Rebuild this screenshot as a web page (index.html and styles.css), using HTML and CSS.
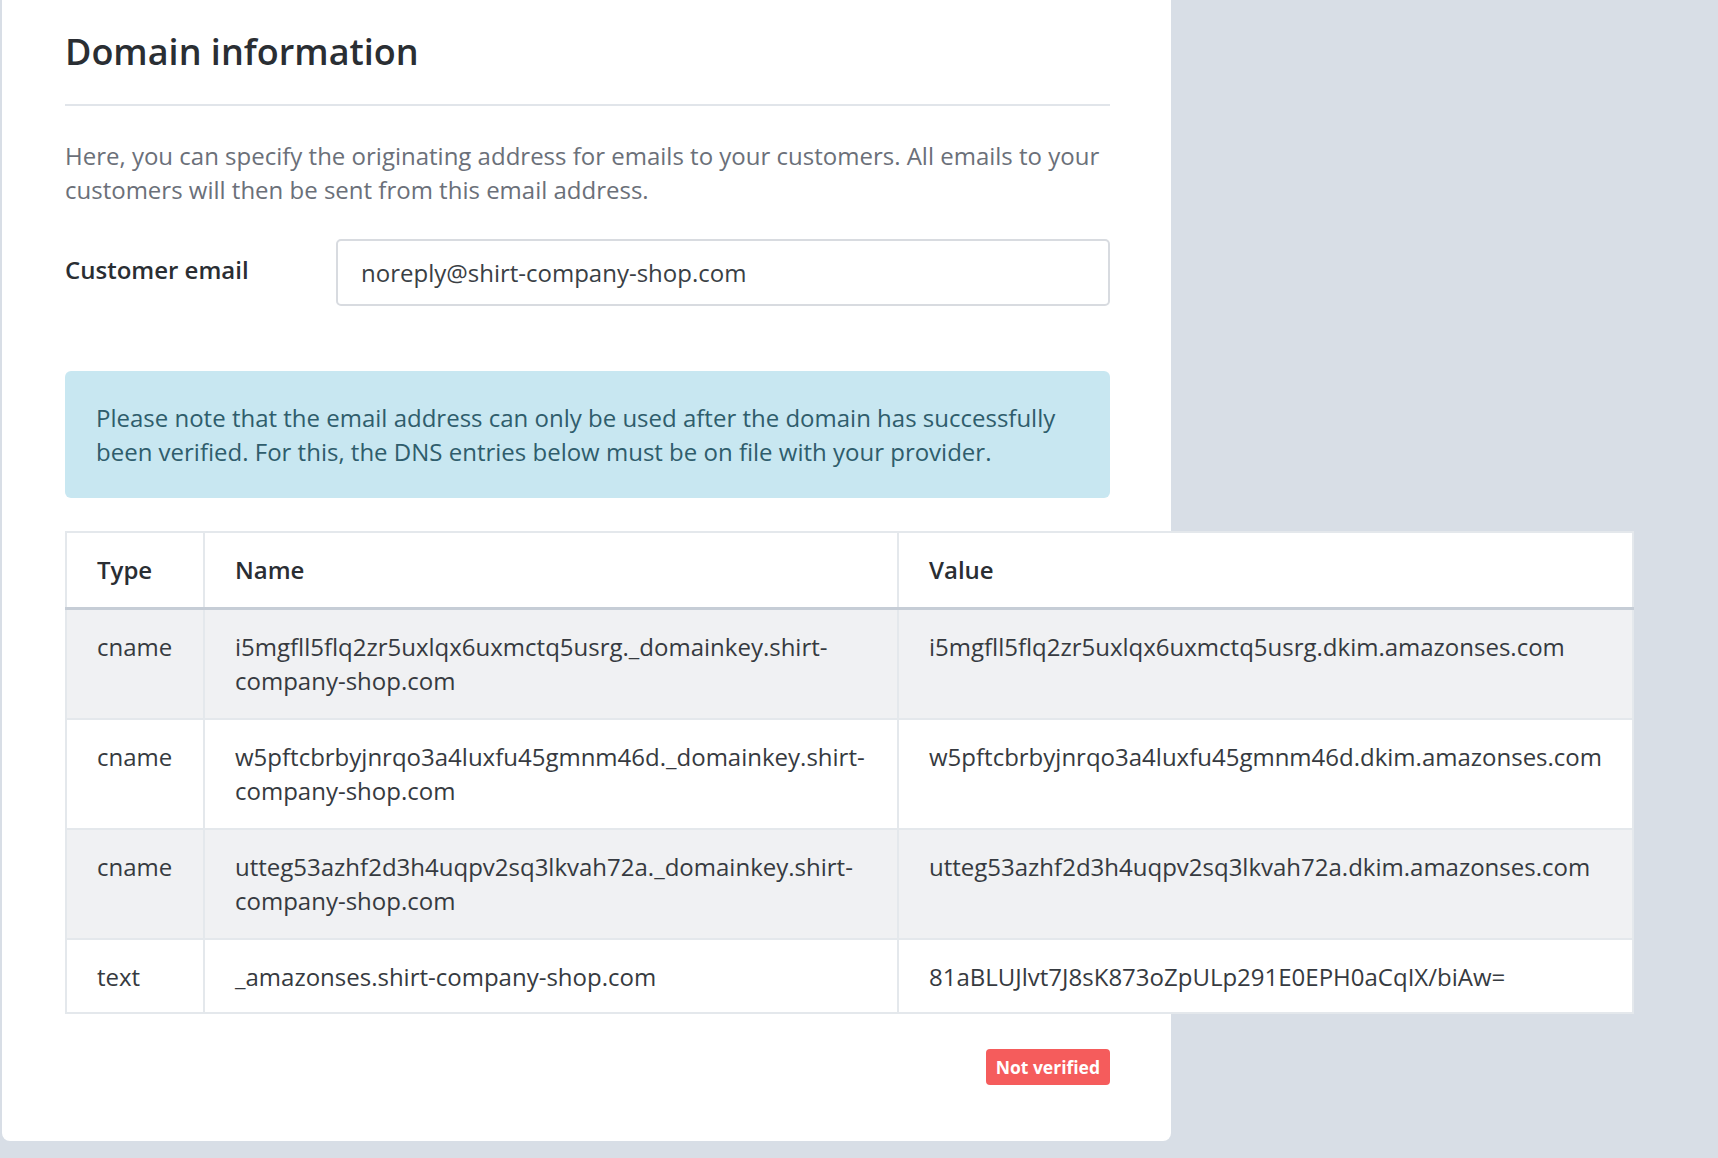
FILE: index.html
```html
<!DOCTYPE html>
<html lang="en">
<head>
  <meta charset="UTF-8">
  <meta name="viewport" content="width=device-width, initial-scale=1.0">
  <title>Domain information</title>
  <link rel="stylesheet" href="styles.css">
</head>
<body>
  <div class="page">
    <div class="card">
      <h1>Domain information</h1>
      <p class="intro">Here, you can specify the originating address for emails to your customers. All emails to your customers will then be sent from this email address.</p>

      <div class="field">
        <label for="customerEmail">Customer email</label>
        <input type="text" id="customerEmail" value="noreply@shirt-company-shop.com">
      </div>

      <div class="alert">Please note that the email address can only be used after the domain has successfully been verified. For this, the DNS entries below must be on file with your provider.</div>

      <table class="dns">
        <thead>
          <tr>
            <th class="col-type">Type</th>
            <th class="col-name">Name</th>
            <th class="col-value">Value</th>
          </tr>
        </thead>
        <tbody>
          <tr>
            <td>cname</td>
            <td>i5mgfll5flq2zr5uxlqx6uxmctq5usrg._domainkey.shirt-company-shop.com</td>
            <td>i5mgfll5flq2zr5uxlqx6uxmctq5usrg.dkim.amazonses.com</td>
          </tr>
          <tr>
            <td>cname</td>
            <td>w5pftcbrbyjnrqo3a4luxfu45gmnm46d._domainkey.shirt-company-shop.com</td>
            <td>w5pftcbrbyjnrqo3a4luxfu45gmnm46d.dkim.amazonses.com</td>
          </tr>
          <tr>
            <td>cname</td>
            <td>utteg53azhf2d3h4uqpv2sq3lkvah72a._domainkey.shirt-company-shop.com</td>
            <td>utteg53azhf2d3h4uqpv2sq3lkvah72a.dkim.amazonses.com</td>
          </tr>
          <tr>
            <td>text</td>
            <td>_amazonses.shirt-company-shop.com</td>
            <td>81aBLUJlvt7J8sK873oZpULp291E0EPH0aCqIX/biAw=</td>
          </tr>
        </tbody>
      </table>

      <div class="status">
        <span class="badge">Not verified</span>
      </div>
    </div>
  </div>
</body>
</html>
```

FILE: styles.css
```css
html, body {
  margin: 0;
  padding: 0;
}
body {
  font-family: 'Open Sans', 'Liberation Sans', Arial, sans-serif;
  background: #d8dee6;
  color: #2a2e33;
  min-height: 100vh;
}
.page {
  padding: 0 0 18px 2px;
}
.card {
  width: 1169px;
  box-sizing: border-box;
  margin-top: -8px;
  padding: 36px 61px 56px 63px;
  background: #fff;
  border-radius: 8px;
}
h1 {
  margin: 0;
  padding: 0 0 28px 0;
  font-size: 36px;
  line-height: 48px;
  font-weight: 600;
  color: #2a2e33;
  border-bottom: 2px solid #e1e5ea;
}
.intro {
  margin: 33px 0 0 0;
  font-size: 24px;
  line-height: 34px;
  color: #6b7079;
}
.field {
  display: flex;
  align-items: center;
  margin-top: 32px;
}
.field label {
  width: 271px;
  flex: none;
  font-size: 24px;
  line-height: 34px;
  font-weight: 600;
  color: #2a2e33;
  margin-top: -6px;
}
.field input {
  flex: 1;
  min-width: 0;
  height: 67px;
  box-sizing: border-box;
  padding: 0 23px;
  font-family: inherit;
  font-size: 24px;
  color: #3a3f45;
  border: 2px solid #d8dbe0;
  border-radius: 5px;
  background: #fff;
}
.alert {
  margin-top: 65px;
  padding: 30px 31px 29px 31px;
  background: #c8e7f1;
  color: #2f5d6c;
  border-radius: 6px;
  font-size: 24px;
  line-height: 34px;
}
.dns {
  margin-top: 33px;
  width: 1569px;
  table-layout: fixed;
  border-collapse: collapse;
  background: #fff;
  border: 2px solid #e4e8ec;
  font-size: 24px;
  line-height: 34px;
  color: #363a40;
}
.col-type { width: 138px; }
.col-name { width: 694px; }
.dns th, .dns td {
  box-sizing: border-box;
  text-align: left;
  vertical-align: top;
  padding: 20px 30px 20px 30px;
  border-left: 2px solid #e4e8ec;
}
.dns th {
  font-weight: 600;
  color: #2a2e33;
  border-bottom: 3px solid #c6cdd6;
}
.dns td {
  border-top: 2px solid #e4e8ec;
}
.dns tbody tr:nth-child(odd) {
  background: #f0f1f3;
}
.dns tbody tr:first-child td {
  border-top: none;
}
.dns tbody tr:last-child td {
  padding-bottom: 18px;
}
.status {
  display: flex;
  justify-content: flex-end;
  margin-top: 35px;
}
.badge {
  display: inline-block;
  padding: 0 10px;
  height: 36px;
  line-height: 36px;
  background: #f55c5c;
  color: #fff;
  font-size: 17.5px;
  font-weight: 700;
  border-radius: 4px;
}
```
